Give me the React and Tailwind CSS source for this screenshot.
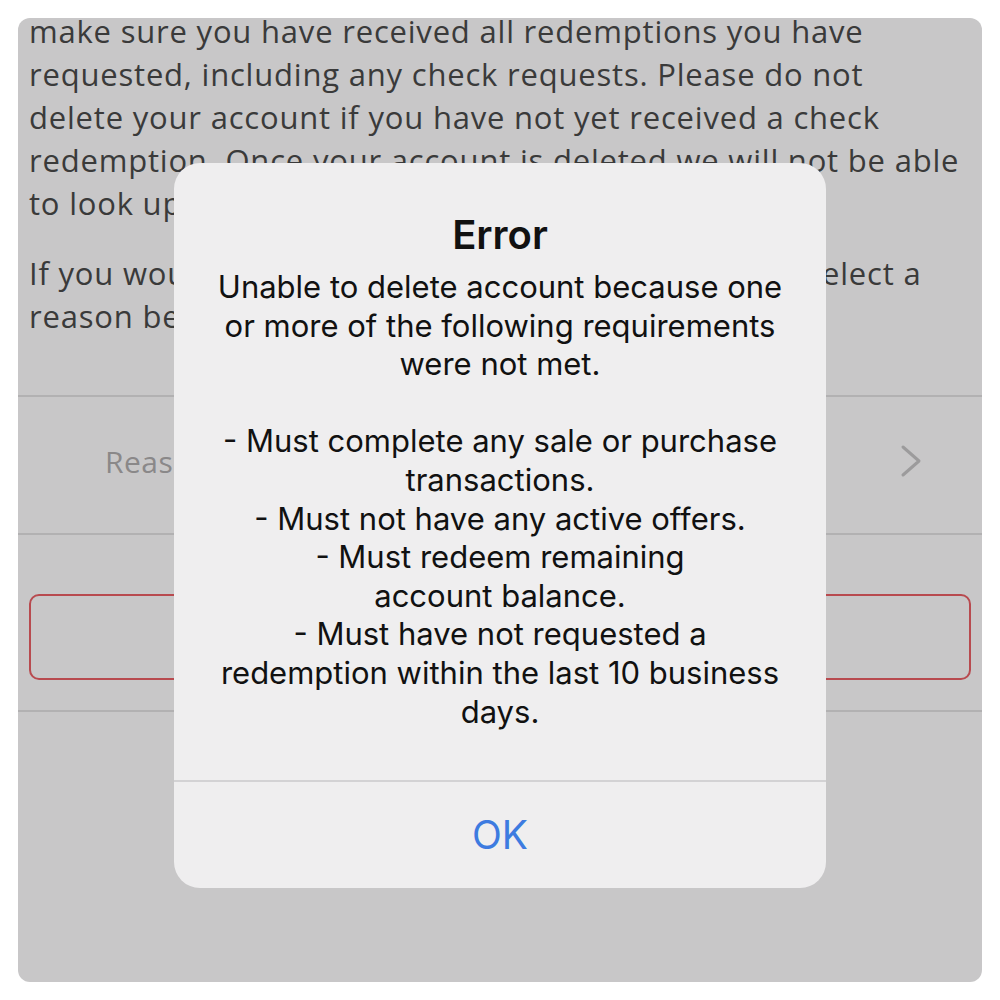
export default function App() {
  const message = [
    "Unable to delete account because one",
    "or more of the following requirements",
    "were not met.",
    "\u00a0",
    "- Must complete any sale or purchase",
    "transactions.",
    "- Must not have any active offers.",
    "- Must redeem remaining",
    "account balance.",
    "- Must have not requested a",
    "redemption within the last 10 business",
    "days.",
  ];

  return (
    <div className="w-[1000px] h-[1000px] bg-white p-[18px]">
      <div
        className="relative w-full h-full bg-[#c8c7c8] rounded-[12px] overflow-hidden"
        style={{ fontFamily: "'Open Sans', Lato, sans-serif" }}
      >
        {/* Page behind the alert */}
        <div className="px-[11px] mt-[-8px] text-[31px] leading-[43px] tracking-[0.8px] text-[#3a3a3a] whitespace-nowrap">
          <p>make sure you have received all redemptions you have</p>
          <p>requested, including any check requests. Please do not</p>
          <p>delete your account if you have not yet received a check</p>
          <p>redemption. Once your account is deleted we will not be able</p>
          <p>to look up your redemption history.</p>
          <p className="mt-[27px]">If you would like to delete the account now, please select a</p>
          <p>reason below.</p>
        </div>

        <div className="mt-[57px] border-t-2 border-[#b2b1b2]" />
        <div className="h-[136px] flex items-center pl-[87px] pr-[60px] pb-[8px] justify-between">
          <span className="text-[30px] tracking-[0.5px] text-[#8a8889]">Reason for deleting</span>
          <svg width="22" height="34" viewBox="0 0 22 34" fill="none">
            <path d="M3 3 L19 17 L3 31" stroke="#9c9b9c" strokeWidth="3" strokeLinecap="round" strokeLinejoin="round" />
          </svg>
        </div>
        <div className="border-t-2 border-[#b2b1b2]" />
        <div className="px-[11px] pt-[59px] pb-[30px]">
          <div className="h-[86px] rounded-[10px] border-2 border-[#b84a4f] flex items-center justify-center text-[30px] text-[#b84a4f]">
            Delete Account
          </div>
        </div>
        <div className="border-t-2 border-[#b2b1b2]" />

        {/* Alert */}
        <div
          className="absolute left-[156px] top-[145px] w-[652px] h-[725px] bg-[#efeeef] rounded-[26px] flex flex-col"
          style={{ fontFamily: "Inter, 'Noto Sans', sans-serif" }}
        >
          <div className="flex-1 pt-[50px] text-center text-[#111111]">
            <h2 className="text-[40px] font-semibold leading-[44px]">Error</h2>
            <div className="mt-[11px] text-[31px] leading-[38.6px]">
              {message.map((line, i) => (
                <p key={i}>{line}</p>
              ))}
            </div>
          </div>
          <div className="border-t-2 border-[#d3d2d4]" />
          <div className="h-[106px] flex items-center justify-center text-[39px] text-[#3d7be0]">
            OK
          </div>
        </div>
      </div>
    </div>
  );
}
